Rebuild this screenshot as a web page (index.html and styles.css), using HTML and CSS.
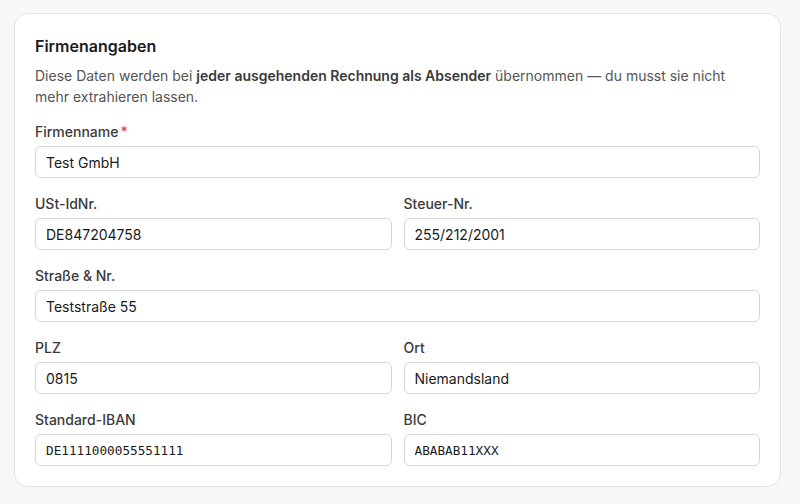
FILE: index.html
```html
<!DOCTYPE html>
<html lang="de">
<head>
  <meta charset="UTF-8" />
  <meta name="viewport" content="width=device-width, initial-scale=1.0" />
  <title>Firmenangaben</title>
  <link rel="stylesheet" href="styles.css">
</head>
<body>
  <section class="card">
    <h2>Firmenangaben</h2>
    <p class="hint">Diese Daten werden bei <strong>jeder ausgehenden Rechnung als Absender</strong> übernommen — du musst sie nicht mehr extrahieren lassen.</p>

    <form class="fields">
      <label class="field full">
        <span class="lbl">Firmenname<span class="req">*</span></span>
        <input type="text" value="Test GmbH" />
      </label>

      <label class="field">
        <span class="lbl">USt-IdNr.</span>
        <input type="text" value="DE847204758" />
      </label>
      <label class="field">
        <span class="lbl">Steuer-Nr.</span>
        <input type="text" value="255/212/2001" />
      </label>

      <label class="field full">
        <span class="lbl">Straße &amp; Nr.</span>
        <input type="text" value="Teststraße 55" />
      </label>

      <label class="field">
        <span class="lbl">PLZ</span>
        <input type="text" value="0815" />
      </label>
      <label class="field">
        <span class="lbl">Ort</span>
        <input type="text" value="Niemandsland" />
      </label>

      <label class="field">
        <span class="lbl">Standard-IBAN</span>
        <input type="text" class="mono" value="DE1111000055551111" />
      </label>
      <label class="field">
        <span class="lbl">BIC</span>
        <input type="text" class="mono" value="ABABAB11XXX" />
      </label>
    </form>
  </section>
</body>
</html>
```

FILE: styles.css
```css
body { margin: 0; padding: 13px 19px 0 14px; background: #f7f7f7; font-family: Inter, "Noto Sans", sans-serif; color: #1a1a1a; }
.card { background: #fff; border: 1px solid #e4e4e4; border-radius: 14px; padding: 20px; }
h2 { margin: 0; font-size: 16px; line-height: 24px; font-weight: 600; color: #1a1a1a; }
.hint { margin: 7px 0 15px; font-size: 14px; line-height: 21px; color: #555; }
.hint strong { font-weight: 600; color: #3a3a3a; }
.fields { display: grid; grid-template-columns: 1fr 1fr; column-gap: 12px; row-gap: 16px; }
.field { display: flex; flex-direction: column; gap: 4px; }
.field.full { grid-column: 1 / -1; }
.lbl { font-size: 14px; line-height: 20px; font-weight: 500; color: #3a3a3a; }
.req { color: #e5484d; margin-left: 2px; }
input { box-sizing: border-box; height: 32px; padding: 0 10px; border: 1px solid #d6d6d6; border-radius: 6px; font-family: inherit; font-size: 14px; color: #1a1a1a; background: #fff; }
input.mono { font-family: "DejaVu Sans Mono", "Liberation Mono", monospace; font-size: 12.7px; }
```
